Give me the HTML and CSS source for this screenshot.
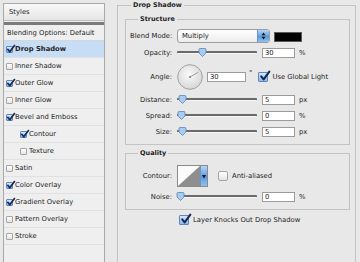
FILE: index.html
```html
<!DOCTYPE html>
<html lang="en">
<head>
    <meta charset="UTF-8">
    <meta name="viewport" content="width=device-width, initial-scale=1.0">
    <title>Layer Style - Drop Shadow</title>
    <link rel="stylesheet" href="styles.css">
</head>
<body>
    <div class="dialog">
        <div class="styles">
            <div class="styles-head">Styles</div>
            <div class="styles-bar"></div>
            <div class="style-row blend">Blending Options: Default</div>
            <div class="style-row active"><span class="cb on"><svg viewBox="0 0 10 10"><path d="M2 4.8 L4.2 7.6 L9.4 0.6"/></svg></span>Drop Shadow</div>
            <div class="style-row"><span class="cb"></span>Inner Shadow</div>
            <div class="style-row"><span class="cb on"><svg viewBox="0 0 10 10"><path d="M2 4.8 L4.2 7.6 L9.4 0.6"/></svg></span>Outer Glow</div>
            <div class="style-row"><span class="cb"></span>Inner Glow</div>
            <div class="style-row"><span class="cb on"><svg viewBox="0 0 10 10"><path d="M2 4.8 L4.2 7.6 L9.4 0.6"/></svg></span>Bevel and Emboss</div>
            <div class="style-row sub"><span class="cb on"><svg viewBox="0 0 10 10"><path d="M2 4.8 L4.2 7.6 L9.4 0.6"/></svg></span>Contour</div>
            <div class="style-row sub"><span class="cb"></span>Texture</div>
            <div class="style-row"><span class="cb"></span>Satin</div>
            <div class="style-row"><span class="cb on"><svg viewBox="0 0 10 10"><path d="M2 4.8 L4.2 7.6 L9.4 0.6"/></svg></span>Color Overlay</div>
            <div class="style-row"><span class="cb on"><svg viewBox="0 0 10 10"><path d="M2 4.8 L4.2 7.6 L9.4 0.6"/></svg></span>Gradient Overlay</div>
            <div class="style-row"><span class="cb"></span>Pattern Overlay</div>
            <div class="style-row"><span class="cb"></span>Stroke</div>
        </div>

        <fieldset class="group outer">
            <legend>Drop Shadow</legend>

            <fieldset class="group structure">
                <legend>Structure</legend>
                <div class="field tall">
                    <label class="lbl">Blend Mode:</label>
                    <div class="select">
                        <span class="select-text">Multiply</span>
                        <span class="stepper"><svg viewBox="0 0 11 14"><path d="M3.3 6 L5.5 2.8 L7.7 6Z"/><path d="M3.3 8 L5.5 11.2 L7.7 8Z"/></svg></span>
                    </div>
                    <span class="swatch"></span>
                </div>
                <div class="field gap4">
                    <label class="lbl">Opacity:</label>
                    <div class="slider"><div class="track"></div><span class="thumb" style="left: 21px"><svg viewBox="0 0 9 9"><path d="M1 1.6 Q1 0.5 2.1 0.5 H6.9 Q8 0.5 8 1.6 V5 L4.5 8.5 L1 5 Z"/></svg></span></div>
                    <input class="num" type="text" value="30">
                    <span class="unit">%</span>
                </div>
                <div class="field angle">
                    <label class="lbl">Angle:</label>
                    <svg class="dial" viewBox="0 0 26 26">
                        <defs>
                            <radialGradient id="dialFill" cx="45%" cy="40%" r="65%">
                                <stop offset="0" stop-color="#fafafa"/>
                                <stop offset="1" stop-color="#d4d4d4"/>
                            </radialGradient>
                        </defs>
                        <circle cx="13" cy="13" r="12.3" fill="url(#dialFill)" stroke="#9a9a9a" stroke-width="0.9"/>
                        <line x1="13" y1="13" x2="21.2" y2="8.3" stroke="#8a8a8a" stroke-width="0.8"/>
                        <circle cx="13" cy="13" r="0.9" fill="#777"/>
                    </svg>
                    <input class="num wide" type="text" value="30">
                    <span class="deg">°</span>
                    <span class="cb big on"><svg viewBox="0 0 10 10"><path d="M2 4.8 L4.2 7.6 L9.4 0.6"/></svg></span>
                    <span class="cb-text">Use Global Light</span>
                </div>
                <div class="field gap4">
                    <label class="lbl">Distance:</label>
                    <div class="slider"><div class="track"></div><span class="thumb" style="left: 1px"><svg viewBox="0 0 9 9"><path d="M1 1.6 Q1 0.5 2.1 0.5 H6.9 Q8 0.5 8 1.6 V5 L4.5 8.5 L1 5 Z"/></svg></span></div>
                    <input class="num" type="text" value="5">
                    <span class="unit">px</span>
                </div>
                <div class="field">
                    <label class="lbl">Spread:</label>
                    <div class="slider"><div class="track"></div><span class="thumb" style="left: 0px"><svg viewBox="0 0 9 9"><path d="M1 1.6 Q1 0.5 2.1 0.5 H6.9 Q8 0.5 8 1.6 V5 L4.5 8.5 L1 5 Z"/></svg></span></div>
                    <input class="num" type="text" value="0">
                    <span class="unit">%</span>
                </div>
                <div class="field">
                    <label class="lbl">Size:</label>
                    <div class="slider"><div class="track"></div><span class="thumb" style="left: 1px"><svg viewBox="0 0 9 9"><path d="M1 1.6 Q1 0.5 2.1 0.5 H6.9 Q8 0.5 8 1.6 V5 L4.5 8.5 L1 5 Z"/></svg></span></div>
                    <input class="num" type="text" value="5">
                    <span class="unit">px</span>
                </div>
            </fieldset>

            <fieldset class="group quality">
                <legend>Quality</legend>
                <div class="field contour-row">
                    <label class="lbl">Contour:</label>
                    <div class="contour">
                        <svg class="curve" viewBox="0 0 23 20" preserveAspectRatio="none"><rect width="23" height="20" fill="#fbfbfb"/><polygon points="0,20 23,0 23,20" fill="#8e8e8e"/></svg>
                        <span class="contour-drop"><svg viewBox="0 0 6 20"><path d="M1 9 L5 9 L3 12.5Z"/></svg></span>
                    </div>
                    <span class="cb big aa"></span>
                    <span class="cb-text">Anti-aliased</span>
                </div>
                <div class="field gap4">
                    <label class="lbl">Noise:</label>
                    <div class="slider"><div class="track"></div><span class="thumb" style="left: -1px"><svg viewBox="0 0 9 9"><path d="M1 1.6 Q1 0.5 2.1 0.5 H6.9 Q8 0.5 8 1.6 V5 L4.5 8.5 L1 5 Z"/></svg></span></div>
                    <input class="num" type="text" value="0">
                    <span class="unit">%</span>
                </div>
            </fieldset>

            <div class="knock">
                <span class="cb big on"><svg viewBox="0 0 10 10"><path d="M2 4.8 L4.2 7.6 L9.4 0.6"/></svg></span>
                <span class="cb-text">Layer Knocks Out Drop Shadow</span>
            </div>
        </fieldset>
    </div>
</body>
</html>
```

FILE: styles.css
```css
body {
    margin: 0;
    background-color: #e8e8e8;
    font-family: "DejaVu Sans", sans-serif;
    font-size: 6.8px;
    color: #232323;
    overflow: hidden;
}
.dialog {
    display: flex;
    align-items: flex-start;
}

/* styles list on the left */
.styles {
    box-sizing: border-box;
    width: 102px;
    height: 270px;
    margin: 3px 0 0 3px;
    border: 1px solid #a9a9a9;
    background-color: #efefef;
}
.styles-head {
    height: 16px;
    line-height: 16px;
    padding-left: 5px;
    background: linear-gradient(#f8f8f8, #e6e6e6);
    border-bottom: 1px solid #bcbcbc;
}
.styles-bar {
    height: 3px;
    margin-top: 1px;
    background-color: #7a7a7a;
}
.style-row {
    box-sizing: border-box;
    height: 17px;
    display: flex;
    align-items: center;
    padding-left: 2px;
    border-bottom: 1px solid #e1e1e1;
}
.style-row.blend {
    height: 16px;
    padding-left: 3px;
    border-bottom-color: #d6d6d6;
}
.style-row.sub {
    padding-left: 16px;
}
.style-row.active {
    background-color: #c7dcf5;
    font-weight: bold;
}
.style-row .cb {
    margin-right: 2px;
}

/* checkboxes */
.cb {
    position: relative;
    flex: none;
    box-sizing: border-box;
    width: 7px;
    height: 7px;
    border: 1px solid #a4a4a4;
    border-radius: 1px;
    background: linear-gradient(#ffffff, #e4e4e4);
}
.cb.on {
    border-color: #6286b6;
    background: linear-gradient(#d9e8fa, #8bbaea);
}
.cb svg {
    position: absolute;
    left: -1px;
    top: -2px;
    width: 9px;
    height: 9px;
    overflow: visible;
}
.cb path {
    fill: none;
    stroke: #142a5c;
    stroke-width: 1.9;
    stroke-linecap: round;
    stroke-linejoin: round;
}
.cb.big {
    width: 10px;
    height: 10px;
}
.cb.big svg {
    left: 0;
    top: -2px;
    width: 11px;
    height: 11px;
}
.cb-text {
    margin-left: 4px;
    white-space: nowrap;
}

/* group boxes */
.group {
    box-sizing: border-box;
    margin: 0;
    min-width: 0;
    border: 1px solid #c3c3c3;
}
.group legend {
    padding: 0 2px;
    font-weight: bold;
    font-size: 6.5px;
    line-height: 10px;
}
.outer {
    width: 239px;
    height: 275px;
    margin-left: 12px;
    padding: 4px 5px 0 7px;
}
.outer > legend {
    margin-left: 6px;
}
.structure,
.quality {
    width: 225px;
    padding: 5px 4px 7px 4px;
}
.structure > legend,
.quality > legend {
    margin-left: 8px;
}
.quality {
    margin-top: 3px;
    padding-top: 7px;
}

/* rows */
.field {
    display: flex;
    align-items: center;
    height: 11px;
    margin-top: 5px;
    white-space: nowrap;
}
.field.tall {
    height: 14px;
    margin-top: 0;
}
.field.gap4 {
    margin-top: 4px;
}
.field.angle {
    height: 27px;
    margin-top: 5px;
}
.field.contour-row {
    height: 22px;
    margin-top: 0;
}
.lbl {
    flex: none;
    width: 42px;
    margin-right: 5px;
    text-align: right;
}

.select {
    box-sizing: border-box;
    display: flex;
    width: 93px;
    height: 14px;
    border: 1px solid #9d9d9d;
    border-radius: 3px;
    background: linear-gradient(#ffffff, #ececec);
    overflow: hidden;
}
.select-text {
    flex: 1;
    padding-left: 4px;
    line-height: 12px;
}
.stepper {
    width: 11px;
    border-left: 1px solid #6b93c4;
    background: linear-gradient(#b7d6f6, #5b9be0 55%, #8fc1f1);
}
.stepper svg {
    display: block;
    width: 11px;
    height: 12px;
}
.stepper path {
    fill: #101010;
}
.swatch {
    box-sizing: border-box;
    width: 28px;
    height: 10px;
    margin-left: 4px;
    margin-top: 1px;
    background-color: #000;
    border: 1px solid #5a5a5a;
}

.slider {
    position: relative;
    flex: none;
    width: 80px;
    height: 11px;
    display: flex;
    align-items: center;
}
.track {
    width: 100%;
    height: 2px;
    background-color: #6a6a6a;
    border-bottom: 1px solid #f6f6f6;
    border-radius: 1px;
}
.thumb {
    position: absolute;
    top: 1px;
    width: 9px;
    height: 9px;
}
.thumb svg {
    display: block;
    width: 9px;
    height: 9px;
}
.thumb path {
    fill: #a9cdf1;
    stroke: #5b84b6;
    stroke-width: 0.8;
}

.num {
    box-sizing: border-box;
    width: 33px;
    height: 10px;
    margin: 0 0 0 5px;
    padding: 0 2px;
    border: 1px solid #9b9b9b;
    background-color: #fff;
    font: inherit;
    color: #232323;
    line-height: 8px;
}
.num.wide {
    width: 39px;
    margin-left: 4px;
}
.unit {
    margin-left: 4px;
}
.deg {
    align-self: flex-start;
    margin: 6px 0 0 3px;
}
.angle .cb {
    margin-left: 6px;
}
.dial {
    width: 26px;
    height: 26px;
}

.contour {
    box-sizing: border-box;
    display: flex;
    width: 31px;
    height: 22px;
    border: 1px solid #8a8a8a;
    background-color: #fff;
}
.curve {
    width: 23px;
    height: 20px;
}
.contour-drop {
    width: 6px;
    border-left: 1px solid #6b93c4;
    background: linear-gradient(#b7d6f6, #5b9be0 55%, #8fc1f1);
}
.contour-drop svg {
    display: block;
    width: 6px;
    height: 20px;
}
.contour-drop path {
    fill: #101010;
}
.cb.aa {
    margin-left: 10px;
    border-radius: 2px;
}

.knock {
    display: flex;
    align-items: center;
    height: 11px;
    margin-top: 4px;
    padding-left: 54px;
}
```
